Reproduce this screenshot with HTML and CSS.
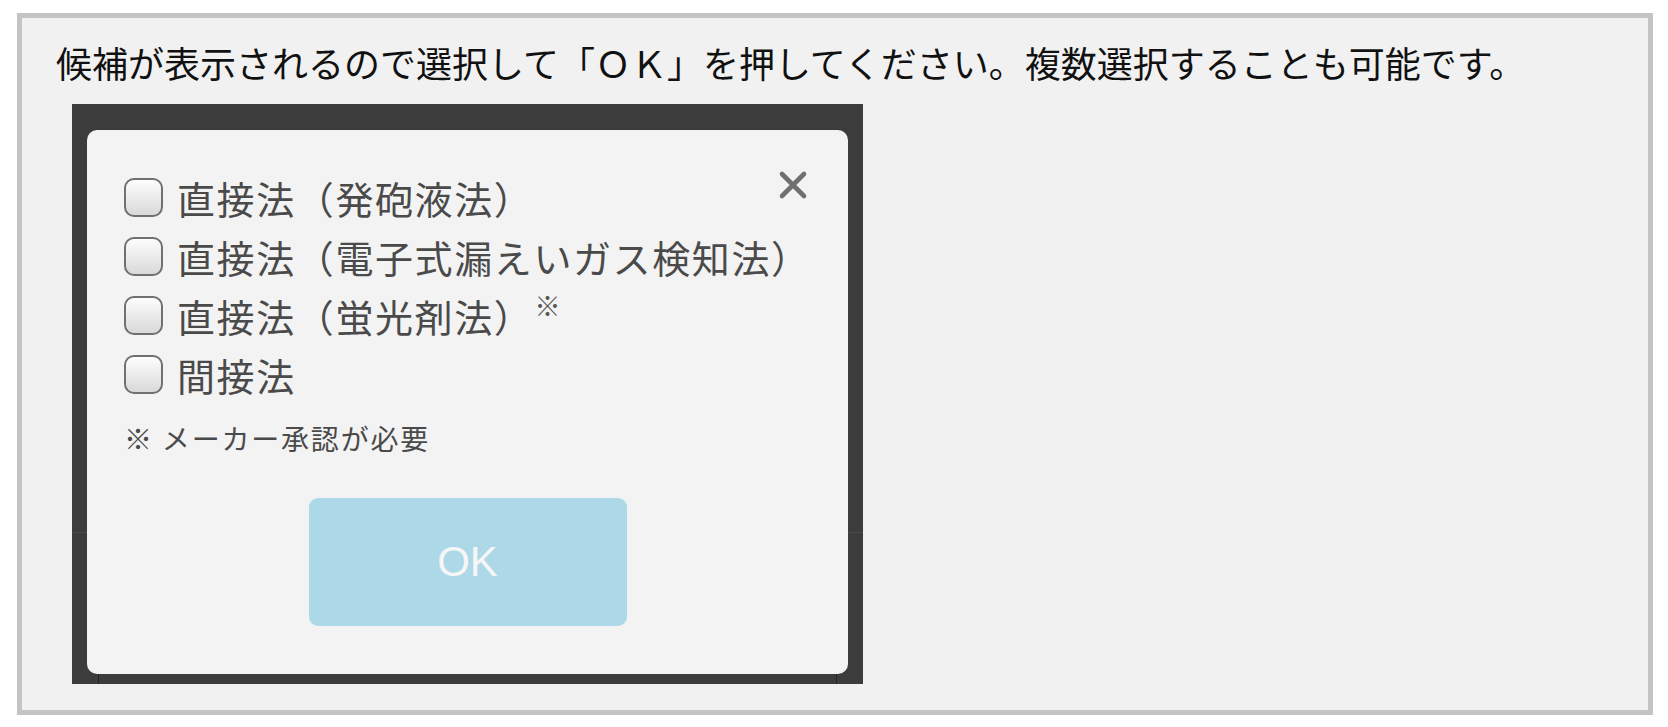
FILE: index.html
```html
<!DOCTYPE html>
<html lang="ja">
<head>
	<meta charset="utf-8">
	<title>選択</title>
	<link rel="stylesheet" href="styles.css">
</head>
<body>
	<div class="panel">
		<p class="lead">候補が表示されるので選択して「ＯＫ」を押してください。複数選択することも可能です。</p>
		<div class="phone">
			<div class="modal">
				<span class="close">
					<svg width="30" height="30" viewBox="0 0 30 30">
						<path d="M4 4L26 26M26 4L4 26" stroke="#707070" stroke-width="4.6" stroke-linecap="round" fill="none"/>
					</svg>
				</span>
				<ul class="choices">
					<li><span class="check"></span>直接法（発砲液法）</li>
					<li><span class="check"></span>直接法（電子式漏えいガス検知法）</li>
					<li><span class="check"></span>直接法（蛍光剤法）<sup class="mark">※</sup></li>
					<li><span class="check"></span>間接法</li>
				</ul>
				<p class="note">※ メーカー承認が必要</p>
				<div class="ok">OK</div>
			</div>
		</div>
	</div>
</body>
</html>
```

FILE: styles.css
```css
*{
	margin: 0;
	padding: 0;
	border: none;
}
body{
	background: #fff;
	font-family: "Noto Sans CJK JP", sans-serif;
}
/*外枠*/
.panel{
	width: 1636px;
	height: 702px;
	margin: 13px 0 0 17px;
	padding-top: 18px;
	border: 5px solid #c4c4c4;
	background: #f1f1f1;
	box-sizing: border-box;
}
.lead{
	padding-left: 34px;
	font-size: 36px;
	line-height: 52px;
	color: #111;
}
/*スマホ画面*/
.phone{
	width: 791px;
	height: 580px;
	margin: 16px 0 0 50px;
	padding: 26px 15px 10px;
	box-sizing: border-box;
	background:
		linear-gradient(#4c4c4c, #4c4c4c) 0 428px / 100% 1px no-repeat,
		linear-gradient(#242424, #242424) 26px 428px / 1px 100% no-repeat,
		linear-gradient(#242424, #242424) 764px 428px / 1px 100% no-repeat,
		#3c3c3c;
}
.modal{
	position: relative;
	height: 100%;
	padding-top: 38px;
	border-radius: 10px;
	background: #f3f3f3;
	box-sizing: border-box;
}
.close{
	position: absolute;
	top: 40px;
	right: 40px;
	width: 30px;
	height: 30px;
}
.close svg{
	display: block;
}
/*選択肢*/
.choices{
	padding-left: 37px;
	list-style: none;
}
.choices li{
	display: flex;
	align-items: center;
	height: 59px;
	font-size: 38px;
	letter-spacing: 1.6px;
	color: #4a4a4a;
}
.check{
	flex: none;
	width: 39px;
	height: 39px;
	margin-right: 14px;
	border: 2px solid #707070;
	border-radius: 10px;
	background: linear-gradient(#fdfdfd, #d9d9d9);
	box-sizing: border-box;
}
.mark{
	align-self: flex-start;
	margin: 6px 0 0 1px;
	font-size: 26px;
	line-height: 1;
	color: #555;
}
.note{
	margin-top: 14px;
	padding-left: 37px;
	font-size: 28px;
	line-height: 40px;
	letter-spacing: 1.8px;
	color: #4a4a4a;
}
/*OKボタン*/
.ok{
	display: flex;
	align-items: center;
	justify-content: center;
	width: 318px;
	height: 128px;
	margin: 40px auto 0;
	border-radius: 9px;
	background: #acd8e8;
	font-family: "Liberation Sans", Arial, sans-serif;
	font-size: 42px;
	color: #f6f6f6;
}
```
